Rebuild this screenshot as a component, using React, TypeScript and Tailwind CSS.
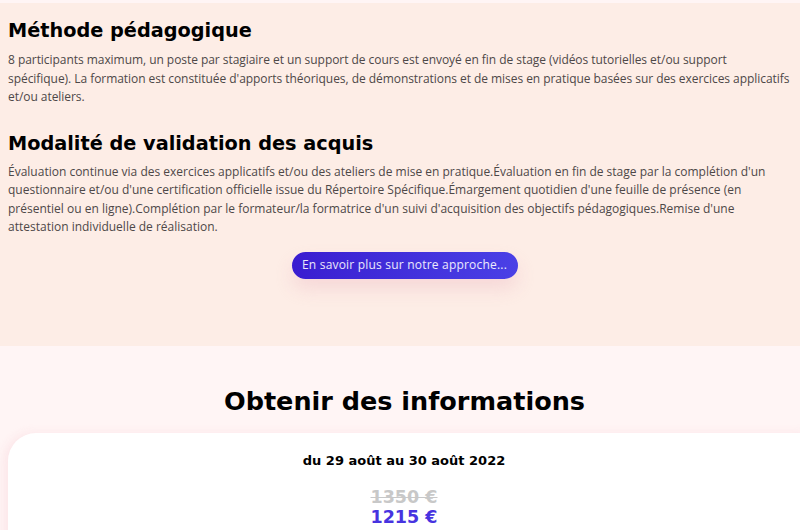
import React from 'react';

const body = "font-['Open_Sans',sans-serif]";
const head = "font-['DejaVu_Sans',sans-serif]";

const App: React.FC = () => {
  return (
    <div className="w-[800px] h-[530px] overflow-hidden bg-[#fff5f5]">
      {/* Pedagogy section */}
      <div className="mt-[3px] bg-[#fdede6] pl-2 pr-0 pt-[14px] h-[343px]">
        <h2 className={`${head} text-[19.3px] leading-[28px] font-bold text-black`}>Méthode pédagogique</h2>
        <p className={`${body} mt-[6px] text-[12px] leading-[18.5px] tracking-[-0.05px] text-[#4d4848]`}>
          8 participants maximum, un poste par stagiaire et un support de cours est envoyé en fin de stage (vidéos tutorielles et/ou support
          <br />
          spécifique). La formation est constituée d'apports théoriques, de démonstrations et de mises en pratique basées sur des exercices applicatifs et/ou ateliers.
        </p>

        <h2 className={`${head} mt-[23px] text-[19.3px] leading-[28px] font-bold text-black`}>Modalité de validation des acquis</h2>
        <p className={`${body} mt-[5px] pr-2 text-[12px] leading-[18.5px] text-[#4d4848]`}>
          Évaluation continue via des exercices applicatifs et/ou des ateliers de mise en pratique.Évaluation en fin de stage par la complétion d'un questionnaire et/ou d'une certification officielle issue du Répertoire Spécifique.Émargement quotidien d'une feuille de présence (en présentiel ou en ligne).Complétion par le formateur/la formatrice d'un suivi d'acquisition des objectifs pédagogiques.Remise d'une attestation individuelle de réalisation.
        </p>

        <div className="mt-[15px] flex justify-center pl-[1px]">
          <button className={`${body} h-[27px] w-[226px] rounded-full bg-gradient-to-r from-[#3a1cd0] to-[#4a40e6] text-[12px] tracking-[0.2px] text-white/90 shadow-[0_10px_18px_rgba(240,190,200,0.45)]`}>
            En savoir plus sur notre approche...
          </button>
        </div>
      </div>

      {/* Info section */}
      <div className="pt-[37px]">
        <h2 className={`${head} pl-[9px] text-center text-[25.5px] leading-[36px] font-bold text-black`}>Obtenir des informations</h2>
        <div className="mt-[14px] ml-2 mr-[-30px] h-[140px] rounded-tl-[28px] rounded-tr-[28px] bg-white pt-[18px] shadow-[-4px_0_10px_rgba(250,220,225,0.6)]">
          <p className={`${head} pr-[30px] text-center text-[13px] leading-[20px] font-bold text-black`}>du 29 août au 30 août 2022</p>
          <div className="mt-[16px] flex flex-col items-center pr-[30px]">
            <span className={`${head} text-[17.5px] leading-[20px] font-bold text-[#c8c8c8] line-through`}>1350 €</span>
            <span className={`${head} text-[17.5px] leading-[20px] font-bold text-[#4733e0]`}>1215 €</span>
          </div>
        </div>
      </div>
    </div>
  );
};

export default App;
